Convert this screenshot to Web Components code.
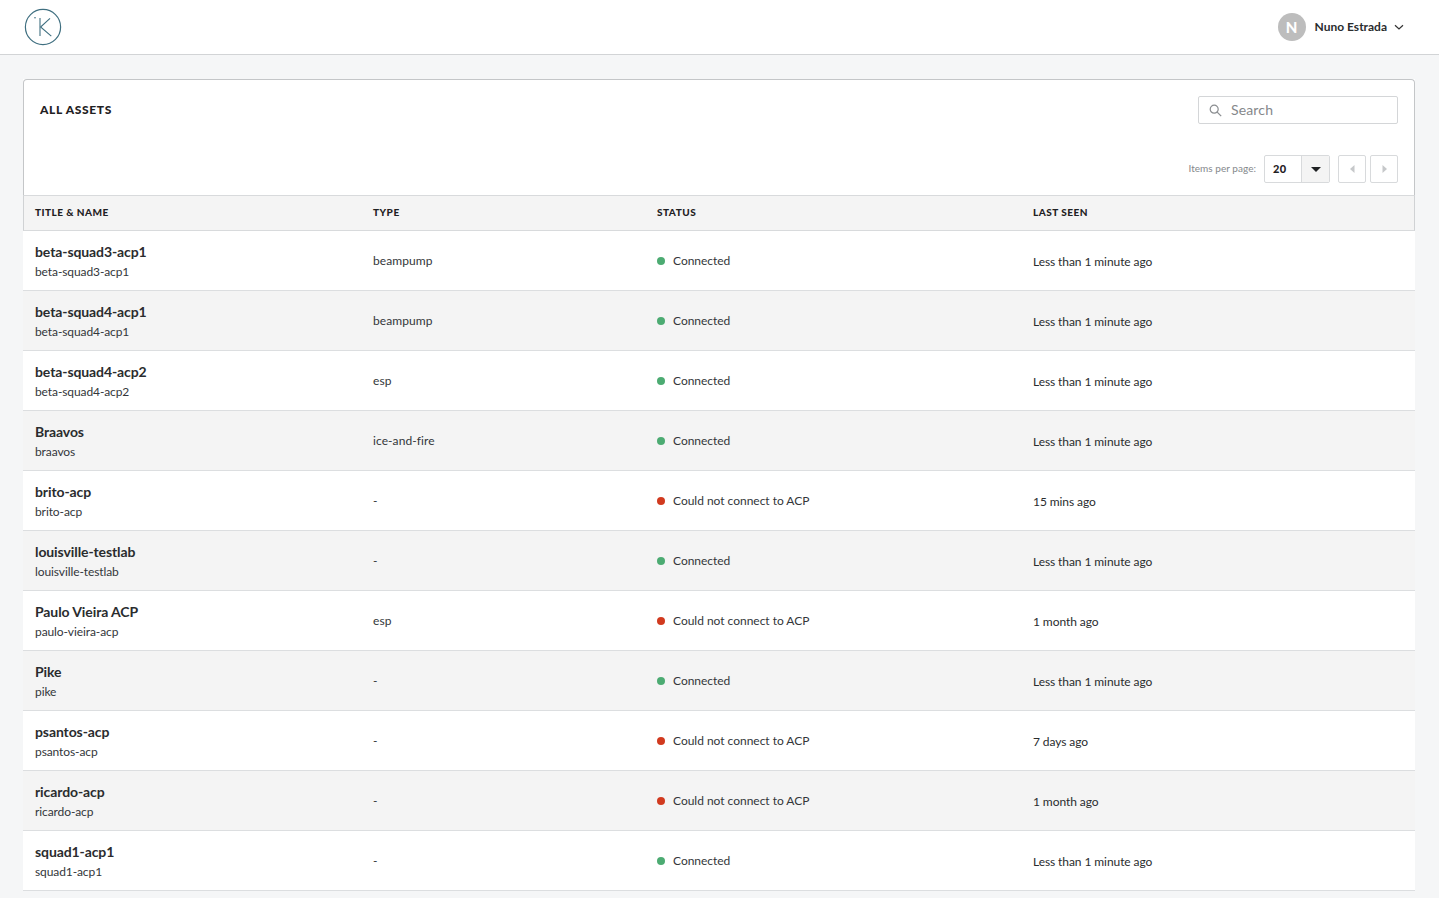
<!DOCTYPE html>
<html lang="en"><head><meta charset="utf-8"><title>All assets</title>
<style>
html,body{margin:0;height:898px;overflow:hidden;background:#f5f6f7;font-family:Lato,"Noto Sans",sans-serif;color:#252729;font-variant-ligatures:none}
</style></head><body>
<app-header></app-header>
<app-main>
  <assets-panel>
    <asset-row title-text="beta-squad3-acp1" name-text="beta-squad3-acp1" type="beampump" status="ok" seen="Less than 1 minute ago"></asset-row>
    <asset-row title-text="beta-squad4-acp1" name-text="beta-squad4-acp1" type="beampump" status="ok" seen="Less than 1 minute ago" shade></asset-row>
    <asset-row title-text="beta-squad4-acp2" name-text="beta-squad4-acp2" type="esp" status="ok" seen="Less than 1 minute ago"></asset-row>
    <asset-row title-text="Braavos" name-text="braavos" type="ice-and-fire" status="ok" seen="Less than 1 minute ago" shade></asset-row>
    <asset-row title-text="brito-acp" name-text="brito-acp" type="-" status="err" seen="15 mins ago"></asset-row>
    <asset-row title-text="louisville-testlab" name-text="louisville-testlab" type="-" status="ok" seen="Less than 1 minute ago" shade></asset-row>
    <asset-row title-text="Paulo Vieira ACP" name-text="paulo-vieira-acp" type="esp" status="err" seen="1 month ago"></asset-row>
    <asset-row title-text="Pike" name-text="pike" type="-" status="ok" seen="Less than 1 minute ago" shade></asset-row>
    <asset-row title-text="psantos-acp" name-text="psantos-acp" type="-" status="err" seen="7 days ago"></asset-row>
    <asset-row title-text="ricardo-acp" name-text="ricardo-acp" type="-" status="err" seen="1 month ago" shade></asset-row>
    <asset-row title-text="squad1-acp1" name-text="squad1-acp1" type="-" status="ok" seen="Less than 1 minute ago"></asset-row>
  </assets-panel>
</app-main>
<script>
function def(name, html){
  customElements.define(name, class extends HTMLElement{
    connectedCallback(){
      if(this.shadowRoot) return;
      const r=this.attachShadow({mode:'open'});
      r.innerHTML=typeof html==='function'?html(this):html;
    }
  });
}
def('app-header',`<style>
:host{display:flex;align-items:center;justify-content:space-between;height:54px;background:#fff;border-bottom:1px solid #d2d4d6;padding:0 35px 0 24px}
svg{display:block}
.user{display:flex;align-items:center;font-size:12px;font-weight:700;color:#2a2c2e}
.av{width:28px;height:28px;border-radius:50%;background:#bdbdbd;color:#fff;font-size:15px;font-weight:900;display:flex;align-items:center;justify-content:center;margin-right:9px}
.nm{padding-bottom:2px}
.chev{margin-left:7px}
</style>
<svg width="38" height="38" viewBox="0 0 38 38" fill="none" stroke="#3f6f80"><circle cx="19" cy="19" r="17.6" stroke-width="1.2"/><path d="M16 10V28" stroke-width="1.1"/><path d="M26 10.3 16.6 19 27.3 28.2" stroke-width="1.1"/><circle cx="11" cy="9.8" r=".8" fill="#3f6f80" stroke="none"/></svg>
<div class="user"><span class="av">N</span><span class="nm">Nuno Estrada</span><svg class="chev" width="10" height="7" viewBox="0 0 10 7" fill="none" stroke="#333" stroke-width="1.2"><path d="M1 1.2 5 5l4-3.8"/></svg></div>`);
def('app-main',`<style>:host{display:block;padding:24px 24px 0 23px}</style><slot></slot>`);
def('assets-panel',`<style>
:host{display:block;background:#fff}
.top{height:115px;border:1px solid #c4c6c8;border-bottom:none;border-radius:4px 4px 0 0;padding:0 16px;display:flex;flex-direction:column}
.r1{display:flex;justify-content:space-between;align-items:center;padding-top:16px;height:28px}
h1{margin:0 0 2px;font-size:12px;font-weight:900;letter-spacing:.65px;color:#1f2123}
.search{box-sizing:border-box;width:200px;height:28px;border:1px solid #d4d6d8;border-radius:2px;display:flex;align-items:center;padding-left:10px;font-size:14px;color:#85888b;gap:9px}
.search span{padding-bottom:2px;letter-spacing:.15px}
.r2{display:flex;justify-content:flex-end;align-items:center;margin-top:31px;height:28px;font-size:10px;color:#85888b}
.r2>span{padding-bottom:2px;letter-spacing:.04px}
.sel{display:flex;width:64px;height:26px;border:1px solid #d8dadc;border-radius:2px;margin-left:8px;color:#1f2123;font-size:11px;letter-spacing:.3px}
.sel b{flex:1;display:flex;align-items:center;padding:0 0 2px 8px;font-weight:900}
.sel i{width:27px;background:#f4f4f4;border-left:1px solid #d8dadc;display:flex;align-items:center;justify-content:center}
.pg{width:26px;height:26px;border:1px solid #d8dadc;border-radius:2px;margin-left:4px;display:flex;align-items:center;justify-content:center}
.pg.first{margin-left:8px}
.head{display:grid;grid-template-columns:338px 284px 376px 1fr;height:34px;align-items:center;background:#f4f4f4;border:1px solid #d8dadc;border-left-color:#d0d2d4;border-right-color:#d0d2d4;padding-left:11px;font-size:10px;font-weight:900;letter-spacing:.5px;word-spacing:-.2px;color:#1f2123}
.head span{padding-bottom:2px}
</style>
<div class="top">
  <div class="r1"><h1>ALL ASSETS</h1>
    <div class="search"><svg width="13" height="13" viewBox="0 0 13 13" fill="none" stroke="#8a8d90" stroke-width="1.2"><circle cx="5.2" cy="5.2" r="4"/><path d="m8.2 8.2 4 4"/></svg><span>Search</span></div></div>
  <div class="r2"><span>Items per page:</span>
    <div class="sel"><b>20</b><i><svg width="10" height="5" viewBox="0 0 10 5"><path d="M0 0h10L5 5z" fill="#1f2123"/></svg></i></div>
    <div class="pg first"><svg width="5" height="8" viewBox="0 0 5 8"><path d="M4.5 0v8L0 4z" fill="#c6c8ca"/></svg></div>
    <div class="pg"><svg width="5" height="8" viewBox="0 0 5 8"><path d="M.5 0v8L5 4z" fill="#c6c8ca"/></svg></div>
  </div>
</div>
<div class="head"><span>TITLE &amp; NAME</span><span>TYPE</span><span>STATUS</span><span>LAST SEEN</span></div>
<slot></slot>`);
def('asset-row',el=>{
  const a=n=>el.getAttribute(n);
  const err=a('status')==='err';
  return `<style>
:host{display:grid;grid-template-columns:338px 284px 376px 1fr;height:59px;align-items:center;background:#fff;border-bottom:1px solid #dcdee0;padding-left:12px;font-size:12px;color:#33363a}
:host([shade]){background:#f4f4f4}
.t{font-size:14px;font-weight:700;line-height:18px;color:#2a2c2e;letter-spacing:-.1px}
.n{font-size:12px;line-height:14px;margin-top:4px;letter-spacing:-.1px}
.c{padding-bottom:1px;letter-spacing:.08px}
.s{display:flex;align-items:center;gap:8px;margin-top:1px}
.s span:last-child{padding-bottom:2px;letter-spacing:-.02px}
.d{width:8px;height:8px;border-radius:50%;background:${err?'#d13a1f':'#4cab72'}}
.l{margin-top:2px;color:#2a2c2e;letter-spacing:-.08px}
</style>
<div><div class="t">${a('title-text')}</div><div class="n">${a('name-text')}</div></div>
<div class="c">${a('type')}</div>
<div class="s"><span class="d"></span><span>${err?'Could not connect to ACP':'Connected'}</span></div>
<div class="l">${a('seen')}</div>`;
});
</script>
</body></html>
